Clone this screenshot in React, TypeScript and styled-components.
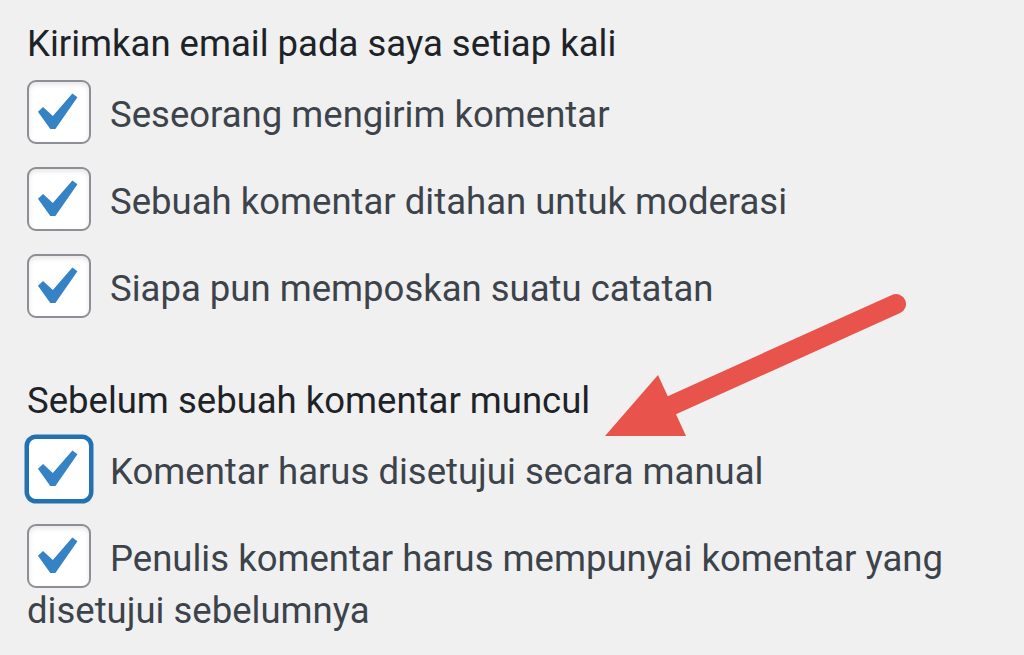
import React from "react";
import styled, { createGlobalStyle } from "styled-components";

const GlobalStyle = createGlobalStyle`
  html, body {
    margin: 0;
    padding: 0;
    background: #f0f0f1;
  }
  body {
    font-family: Roboto, "Noto Sans", "Liberation Sans", Arial, sans-serif;
  }
`;

const Page = styled.div`
  position: relative;
  height: 655px;
  overflow: hidden;
  box-sizing: border-box;
  padding: 21px 27px 0;
  font-size: 36.5px;
  line-height: 46px;
  color: #3c434a;
`;

const Fieldset = styled.fieldset`
  border: 0;
  margin: 0 0 27px;
  padding: 0;
  min-width: 0;
`;

const Legend = styled.div`
  color: #1d2327;
  margin-bottom: 23px;
`;

const Label = styled.label`
  display: block;
  margin-bottom: 33px;
  cursor: pointer;
`;

const Box = styled.span<{ $focused?: boolean }>`
  display: inline-block;
  vertical-align: middle;
  box-sizing: border-box;
  width: 64px;
  height: 64px;
  margin: -10px 10px 0 0;
  border: 2px solid ${(p) => (p.$focused ? "#2271b1" : "#8c8f94")};
  border-radius: 9px;
  background: #fff;
  line-height: 0;
  box-shadow: ${(p) =>
    p.$focused
      ? "0 0 0 2.5px #2271b1"
      : "inset 0 2.5px 5px rgba(0, 0, 0, 0.1)"};
`;

const Tick = styled.svg`
  display: block;
  width: 76px;
  height: 76px;
  margin: -7.5px -12.6px;
  fill: #3582c4;
`;

const Overlay = styled.svg`
  position: absolute;
  top: 0;
  left: 0;
  width: 1024px;
  height: 655px;
  pointer-events: none;
`;

const Checkbox: React.FC<{ focused?: boolean }> = ({ focused }) => (
  <Box $focused={focused} role="checkbox" aria-checked="true">
    <Tick viewBox="0 0 20 20">
      <path d="M14.83 4.89l1.34.94-5.81 8.38H9.02L5.78 9.67l1.34-1.25 2.57 2.4z" />
    </Tick>
  </Box>
);

const groups = [
  {
    title: "Kirimkan email pada saya setiap kali",
    items: [
      { text: "Seseorang mengirim komentar" },
      { text: "Sebuah komentar ditahan untuk moderasi" },
      { text: "Siapa pun memposkan suatu catatan" },
    ],
  },
  {
    title: "Sebelum sebuah komentar muncul",
    items: [
      { text: "Komentar harus disetujui secara manual", focused: true },
      { text: "Penulis komentar harus mempunyai komentar yang disetujui sebelumnya" },
    ],
  },
];

export default function App() {
  return (
    <>
      <GlobalStyle />
      <Page>
        {groups.map((g) => (
          <Fieldset key={g.title}>
            <Legend>{g.title}</Legend>
            {g.items.map((item) => (
              <Label key={item.text}>
                <Checkbox focused={item.focused} /> {item.text}
              </Label>
            ))}
          </Fieldset>
        ))}
        {/* red pointer drawn over the form */}
        <Overlay viewBox="0 0 1024 655">
          <line
            x1="896"
            y1="304"
            x2="668"
            y2="407"
            stroke="#e8534b"
            strokeWidth="20"
            strokeLinecap="round"
          />
          <polygon points="605,436 658,375 686,436" fill="#e8534b" />
        </Overlay>
      </Page>
    </>
  );
}
